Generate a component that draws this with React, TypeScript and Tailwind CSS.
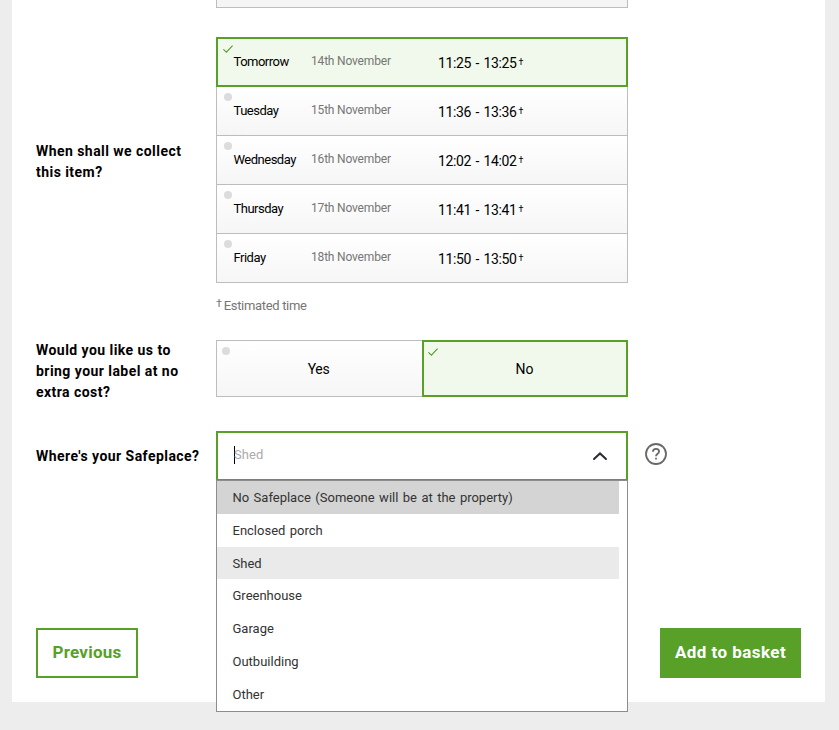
import { useState } from 'react'
import type { ReactNode } from 'react'

interface Slot {
  day:  string
  date: string
  time: string
}

const slots: Slot[] = [
  { day: 'Tomorrow',  date: '14th November', time: '11:25 - 13:25' },
  { day: 'Tuesday',   date: '15th November', time: '11:36 - 13:36' },
  { day: 'Wednesday', date: '16th November', time: '12:02 - 14:02' },
  { day: 'Thursday',  date: '17th November', time: '11:41 - 13:41' },
  { day: 'Friday',    date: '18th November', time: '11:50 - 13:50' },
]

const places = [
  'No Safeplace (Someone will be at the property)',
  'Enclosed porch',
  'Shed',
  'Greenhouse',
  'Garage',
  'Outbuilding',
  'Other',
]

// Small tick or grey dot in the corner of an option
function Marker({ checked }: { checked: boolean }) {
  if (!checked) return <span className="block w-2 h-2 rounded-full bg-[#dcdcdc]" />
  return (
    <svg viewBox="0 0 10 8" width="10" height="8" fill="none" stroke="#58a027" strokeWidth="1.2">
      <path d="M.4 4.4 3.4 7.1 9.6.6" />
    </svg>
  )
}

function Label({ children }: { children: ReactNode }) {
  return (
    <div className="w-[180px] shrink-0 text-[14px] leading-[21px] font-bold tracking-[0.45px] text-black whitespace-pre-line">
      {children}
    </div>
  )
}

function SlotRow({ slot, checked, onSelect }: { slot: Slot; checked: boolean; onSelect: () => void }) {
  return (
    <button
      onClick={onSelect}
      className={
        checked
          ? 'relative flex w-full h-[50px] pl-[15.5px] items-center text-left border-2 border-[#58a027] bg-[#f1f9ec]'
          : 'relative flex w-full h-[49px] pl-[16.5px] items-center text-left border border-t-0 border-[#bdbdbd] bg-linear-to-b from-white to-[#f6f6f6]'
      }
    >
      <span className={checked ? 'absolute left-[5px] top-1.5' : 'absolute left-[7px] top-1.5'}>
        <Marker checked={checked} />
      </span>
      <span className="w-[77.5px] text-[13px] tracking-[-0.5px] text-black">{slot.day}</span>
      <span className="w-[127px] pb-0.5 text-[12px] tracking-[-0.18px] text-[#767676]">{slot.date}</span>
      <span className="pt-px text-[14px] leading-5 tracking-[-0.35px] [word-spacing:1.3px] text-black">
        {slot.time}
        <span className="ml-0.5 text-[9px] align-[3px]">†</span>
      </span>
    </button>
  )
}

export default function App() {
  const [slot, setSlot] = useState(0)
  const [bringLabel, setBringLabel] = useState(false)
  const [place, setPlace] = useState('Shed')

  return (
    <div className="h-[730px] overflow-hidden bg-[#ededed] pl-3 pr-3.5 font-['Roboto','Liberation_Sans',sans-serif]">
      <div className="h-[702px] bg-white px-6">
        {/* End of the previous question */}
        <div className="ml-[180px] w-[412px] h-2 border border-t-0 border-[#bdbdbd] bg-[#f5f5f5]" />

        {/* Collection day */}
        <div className="mt-[29px] flex items-center h-[246px]">
          <div className="pt-1">
            <Label>{'When shall we collect\nthis item?'}</Label>
          </div>
          <div className="w-[412px]">
            {slots.map((s, i) => (
              <SlotRow key={s.day} slot={s} checked={i === slot} onSelect={() => setSlot(i)} />
            ))}
          </div>
        </div>
        <p className="ml-[180px] mt-[13px] h-5 text-[13px] leading-5 tracking-[-0.33px] text-[#767676]">
          <span className="mr-0.5 text-[11px] align-[3px] leading-none">†</span>Estimated time
        </p>

        {/* Label printing */}
        <div className="mt-6 flex items-center h-[57px]">
          <div className="pt-[5px]">
            <Label>{'Would you like us to\nbring your label at no\nextra cost?'}</Label>
          </div>
          <div className="flex w-[412px]">
            {[true, false].map(v => (
              <button
                key={String(v)}
                onClick={() => setBringLabel(v)}
                className={
                  bringLabel === v
                    ? 'relative w-[206px] h-[57px] pt-px pr-px text-[14px] text-black border-2 border-[#58a027] bg-[#f1f9ec]'
                    : 'relative w-[206px] h-[57px] pt-px pr-0.5 text-[14px] tracking-[-0.3px] text-black border border-r-0 border-[#bdbdbd] bg-linear-to-b from-white to-[#f6f6f6]'
                }
              >
                <span className={bringLabel === v ? 'absolute left-1 top-1.5' : 'absolute left-[5px] top-1.5'}>
                  <Marker checked={bringLabel === v} />
                </span>
                {v ? 'Yes' : 'No'}
              </button>
            ))}
          </div>
        </div>

        {/* Safeplace */}
        <div className="mt-[34px] flex items-center h-[50px]">
          <Label>Where's your Safeplace?</Label>
          <div className="relative w-[412px] h-[50px] shrink-0">
            <div className="flex items-center justify-between h-full pl-4 pr-[18px] border-2 border-[#58a027] bg-white">
              <span className="flex items-center h-[18px] border-l border-black text-[13px] tracking-[0.1px] text-[#ababab] -mt-0.5">
                <span className="-ml-px">{place}</span>
              </span>
              <svg viewBox="0 0 16 10" width="16" height="10" fill="none" stroke="#2b2b33" strokeWidth="2" strokeLinecap="round">
                <path d="M2 8 8 2.4 14 8" />
              </svg>
            </div>
            <ul className="absolute left-0 top-[49px] z-10 w-[412px] h-[232px] border border-[#8d8d8d] bg-white pr-2">
              {places.map((p, i) => (
                <li
                  key={p}
                  onClick={() => setPlace(p)}
                  className={
                    i === 0
                      ? 'flex items-center h-[32.8px] pt-[0.8px] pl-[15.5px] text-[13px] [word-spacing:1.2px] text-[#333] bg-[#d4d4d4]'
                      : p === place
                        ? 'flex items-center h-[32.8px] pt-[0.8px] pl-[15.5px] text-[13px] [word-spacing:1.2px] text-[#333] bg-[#eaeaea]'
                        : 'flex items-center h-[32.8px] pt-[0.8px] pl-[15.5px] text-[13px] [word-spacing:1.2px] text-[#333]'
                  }
                >
                  {p}
                </li>
              ))}
            </ul>
          </div>
          <svg className="ml-[17px] -mt-1" viewBox="0 0 22 22" width="22" height="22" fill="none" stroke="#686868" strokeWidth="1.8">
            <circle cx="11" cy="11" r="10" />
            <path d="M7.9 8.7C8 7 9.2 5.8 11 5.8s3.1 1.1 3.1 2.7c0 2.3-3.1 2.2-3.1 4.7" />
            <path d="M11 14.8v1.7" />
          </svg>
        </div>

        <div className="mt-[147px] flex justify-between">
          <button className="w-[102px] h-[50px] border-2 border-[#58a027] bg-white text-[17px] tracking-[0.25px] font-bold text-[#58a027]">
            Previous
          </button>
          <button className="w-[141px] h-[50px] bg-[#58a027] text-[17px] tracking-[0.45px] font-bold text-white">
            Add to basket
          </button>
        </div>
      </div>
    </div>
  )
}
